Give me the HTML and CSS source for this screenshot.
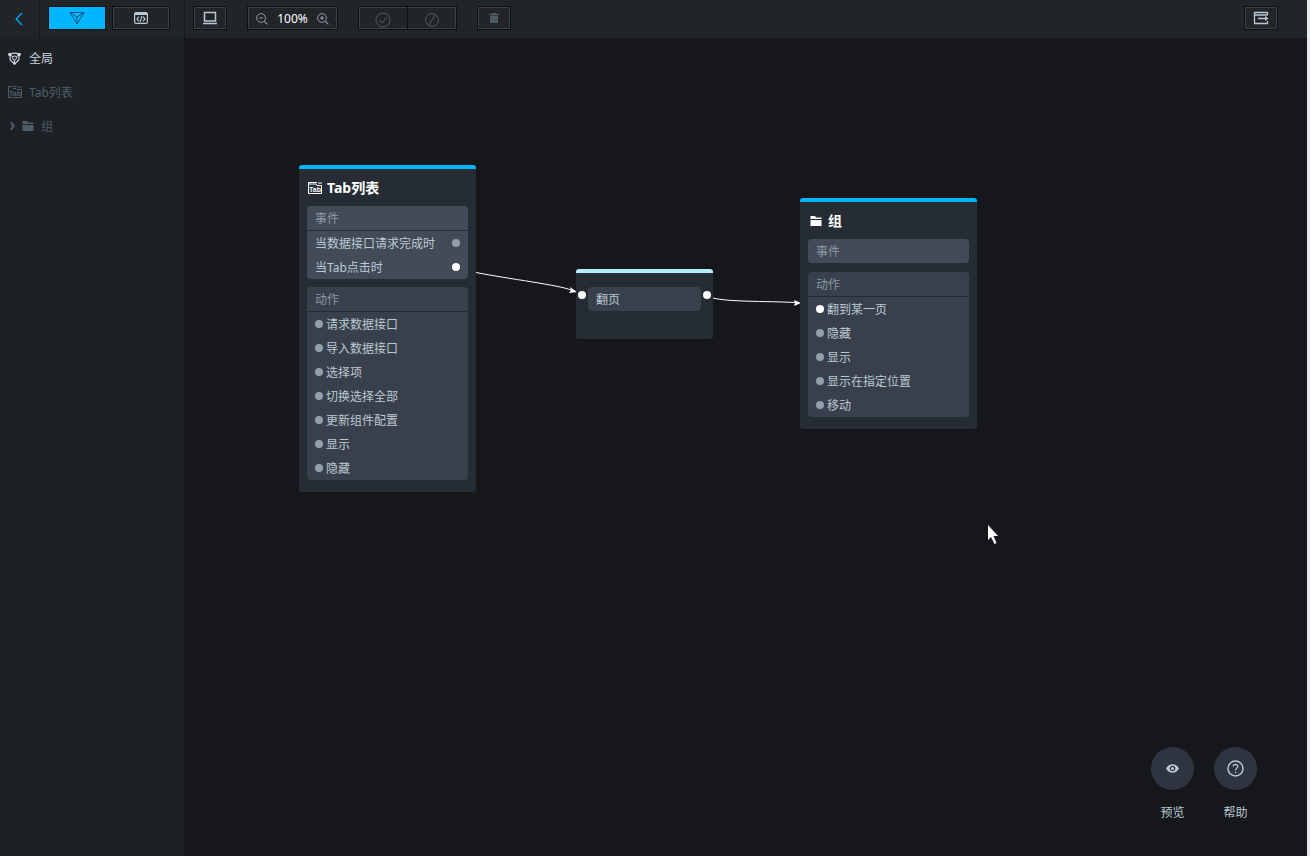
FILE: index.html
```html
<!DOCTYPE html>
<html lang="zh-CN">
<head>
	<meta charset="UTF-8">
	<title>蓝图编辑器</title>
	<link rel="stylesheet" href="styles.css">
</head>
<body>
	<div class="app">
		<header class="topbar">
			<div class="topbar-left">
				<button class="back" aria-label="返回">
					<svg width="8" height="14" viewBox="0 0 8 14"><path d="M7 1L1.200 7 7 13" fill="none" stroke="currentColor" stroke-width="1.500"/></svg>
				</button>
				<div class="modes">
					<button class="btn btn-wide active" aria-label="蓝图">
						<svg width="16" height="14" viewBox="0 0 16 14"><path d="M1 1.500h14L8 13zM1 1.500l7 4.500 7-4.500M8 6v7" fill="none" stroke="currentColor" stroke-width=".9"/></svg>
					</button>
					<button class="btn btn-wide" aria-label="代码">
						<svg width="14" height="12" viewBox="0 0 14 12"><rect x=".6" y=".6" width="12.800" height="10.800" rx="1.500" fill="none" stroke="currentColor" stroke-width="1.200"/><path d="M1 1h12v2H1z" fill="currentColor"/><path d="M5 4.700L3 7l2 2.300M9 4.700L11 7 9 9.300M7.800 4.200L6.200 9.800" fill="none" stroke="currentColor" stroke-width="1.200"/></svg>
					</button>
				</div>
			</div>
			<div class="tools">
				<button class="btn btn-icon" aria-label="画布">
					<svg width="14" height="14" viewBox="0 0 14 14"><path d="M1.500 1.500h11v8.500h-11z" fill="none" stroke="currentColor" stroke-width="1.500"/><path d="M0 12.500h14" stroke="currentColor" stroke-width="1.500"/></svg>
				</button>
				<div class="btn zoom">
					<button class="plain" aria-label="缩小">
						<svg width="12" height="12" viewBox="0 0 12 12"><path d="M3 5h4M8.400 8.400l3 3" stroke="currentColor" stroke-width="1.200"/><circle cx="5" cy="5" r="4.400" fill="none" stroke="currentColor"/></svg>
					</button>
					<span>100%</span>
					<button class="plain" aria-label="放大">
						<svg width="12" height="12" viewBox="0 0 12 12"><path d="M3 5h4M5 3v4M8.400 8.400l3 3" stroke="currentColor" stroke-width="1.200"/><circle cx="5" cy="5" r="4.400" fill="none" stroke="currentColor"/></svg>
					</button>
				</div>
				<div class="btn pair">
					<button class="plain" aria-label="启用" disabled>
						<svg width="16" height="16" viewBox="0 0 16 16"><circle cx="8" cy="8" r="7" fill="none" stroke="currentColor"/><path d="M4.200 8l3 3 5-6" fill="none" stroke="currentColor"/></svg>
					</button>
					<button class="plain" aria-label="禁用" disabled>
						<svg width="16" height="16" viewBox="0 0 16 16"><circle cx="8" cy="8" r="6.500" fill="none" stroke="currentColor"/><path d="M11.500 2.500l-7 11" fill="none" stroke="currentColor"/></svg>
					</button>
				</div>
				<button class="btn btn-icon" aria-label="删除" disabled>
					<svg width="10" height="10" viewBox="0 0 10 10"><path d="M0 .8h3V0h4v.8h3V2H0zM1 2.500h8V10H1z" fill="currentColor"/></svg>
				</button>
			</div>
			<button class="btn btn-icon export" aria-label="导出">
				<svg width="16" height="14" viewBox="0 0 16 14"><path d="M14.500 4V1.500h-13v11h13V10M1 4h13.500M5 7.500h9" fill="none" stroke="currentColor" stroke-width="1.300"/><path d="M12 5l3.500 2.500L12 10z" fill="currentColor"/></svg>
			</button>
		</header>
		<div class="content">
			<nav class="sidebar">
				<ul>
					<li class="current">
						<svg width="13" height="13" viewBox="0 0 13 13"><path d="M2 2.500C5 .8 8 .8 11 2.500L10.800 8 6.500 12 2.200 8z" fill="none" stroke="currentColor" stroke-width="1.200"/><path d="M2.500 3L5 5M10.500 3L8 5M6.500 8v3" fill="none" stroke="currentColor"/><circle cx="6.500" cy="6" r="2" fill="none" stroke="currentColor"/><circle cx="1.800" cy="2.500" r="1.700" fill="currentColor"/><circle cx="11.200" cy="2.500" r="1.700" fill="currentColor"/><circle cx="6.500" cy="11.500" r="1.300" fill="currentColor"/></svg>
						<a href="#">全局</a>
					</li>
					<li>
						<svg width="14" height="12" viewBox="0 0 14 12"><path d="M9 .5H.5v11h13V3.500M5 2.500h3l1 1h4.500M10 1h4" fill="none" stroke="currentColor"/><text x="7" y="10" class="tab-text">Tab</text></svg>
						<a href="#">Tab列表</a>
					</li>
					<li class="group">
						<svg width="5" height="8" viewBox="0 0 5 8"><path d="M0 0h2l3 4-3 4H0l2-4z" fill="currentColor"/></svg>
						<svg width="12" height="10" viewBox="0 0 12 10"><path d="M.5 0h4.500l1 1.500h5.500V3H.5zM.5 4h11v6H.5z" fill="currentColor"/></svg>
						<a href="#">组</a>
					</li>
				</ul>
			</nav>
			<main class="canvas">
				<svg class="lines" width="800" height="400">
					<path d="M292 234.500C325 241 375 247 387 252"/>
					<path d="M529 260C545 264 580 263 611 264.500"/>
					<path class="head" d="M393 254l-7-5 1 3-2 3z"/>
					<path class="head" d="M617 265l-7-3 1 3-1 3z"/>
				</svg>

				<section class="node node-tab">
					<h3><svg width="14" height="12" viewBox="0 0 14 12"><path d="M9 .5H.5v11h13V3.500M1 2h7l1 1.500h4.500M10 1h4" fill="none" stroke="currentColor"/><text x="7" y="10" class="tab-text">Tab</text></svg>Tab列表</h3>
					<div class="panel events">
						<h4>事件</h4>
						<ul>
							<li>当数据接口请求完成时<i class="dot"></i></li>
							<li>当Tab点击时<i class="dot on"></i></li>
						</ul>
					</div>
					<div class="panel">
						<h4>动作</h4>
						<ul>
							<li><i class="dot"></i>请求数据接口</li>
							<li><i class="dot"></i>导入数据接口</li>
							<li><i class="dot"></i>选择项</li>
							<li><i class="dot"></i>切换选择全部</li>
							<li><i class="dot"></i>更新组件配置</li>
							<li><i class="dot"></i>显示</li>
							<li><i class="dot"></i>隐藏</li>
						</ul>
					</div>
				</section>

				<section class="node node-page">
					<i class="dot on"></i>
					<p>翻页</p>
					<i class="dot on"></i>
				</section>

				<section class="node node-group">
					<h3><svg width="12" height="10" viewBox="0 0 12 10"><path d="M.5 0h4.500l1 1.500h5.500V3H.5zM.5 4h11v6H.5z" fill="currentColor"/></svg>组</h3>
					<div class="panel events empty">
						<h4>事件</h4>
					</div>
					<div class="panel">
						<h4>动作</h4>
						<ul>
							<li><i class="dot on"></i>翻到某一页</li>
							<li><i class="dot"></i>隐藏</li>
							<li><i class="dot"></i>显示</li>
							<li><i class="dot"></i>显示在指定位置</li>
							<li><i class="dot"></i>移动</li>
						</ul>
					</div>
				</section>

				<svg class="cursor" width="12" height="20" viewBox="0 0 12 20"><path d="M0 0v15l3-3 3.500 7 2-1-3-7H10z" fill="#fff"/></svg>

				<div class="helpers">
					<button>
						<span class="round"><svg width="13" height="9" viewBox="0 0 12 8"><path d="M0 4C2.500-1.200 9.500-1.200 12 4 9.500 9.200 2.500 9.200 0 4z" fill="currentColor"/><circle cx="6" cy="4" r="2" fill="none" stroke="#2e3540" stroke-width="1.200"/></svg></span>
						预览
					</button>
					<button>
						<span class="round"><svg width="17" height="17" viewBox="0 0 18 18"><circle cx="9" cy="9" r="8" fill="none" stroke="currentColor" stroke-width="1.500"/><path d="M6.500 7c0-3.300 5-3.300 5 0 0 1.800-2.500 2-2.500 4" fill="none" stroke="currentColor" stroke-width="1.300"/><circle cx="9" cy="13.200" r=".8" fill="currentColor"/></svg></span>
						帮助
					</button>
				</div>
			</main>
		</div>
	</div>
</body>
</html>
```

FILE: styles.css
```css
*{
	padding: 0;
	margin: 0;
	box-sizing: border-box;
}
body{
	background: #e8eaed;
	color: #bcc9d4;
	font: 12px/26px "Noto Sans", "Noto Sans CJK SC", sans-serif;
}
ul{
	list-style: none;
}
a{
	color: inherit;
	text-decoration: none;
}
button{
	background: none;
	border: none;
	color: inherit;
	font: inherit;
	cursor: pointer;
}
svg{
	display: block;
	flex: none;
}
.tab-text{
	font: bold 7px "Liberation Sans", sans-serif;
	text-anchor: middle;
	fill: currentColor;
}
.app{
	display: flex;
	flex-direction: column;
	min-height: 100vh;
	margin-right: 3px;
	background: #15171b;
}

/* 顶部工具栏 */
.topbar{
	display: flex;
	align-items: center;
	height: 38px;
	padding-right: 29px;
	background: #222528;
}
.topbar-left{
	display: flex;
	width: 185px;
	height: 100%;
	border-right: 1px solid #15171b;
}
.back{
	display: flex;
	align-items: center;
	justify-content: center;
	width: 40px;
	padding-right: 2px;
	border-right: 1px solid #15171b;
	color: #00a5f0;
}
.modes{
	display: flex;
	align-items: center;
	gap: 6px;
	padding: 0 0 2px 8px;
}
.btn{
	display: flex;
	align-items: center;
	justify-content: center;
	height: 24px;
	border: 1px solid #0e1013;
	box-shadow: inset 0 0 0 1px #393f4a;
}
.btn-wide{
	width: 58px;
}
.btn-icon{
	width: 34px;
}
.btn.active{
	background: #00b7ff;
	box-shadow: none;
	color: #0b4a72;
}
.btn:disabled,
.plain:disabled{
	color: #4c5a62;
	cursor: default;
}
.tools{
	display: flex;
	gap: 20px;
	padding: 0 0 2px 8px;
}
.zoom{
	gap: 9px;
	width: 91px;
	padding-top: 2px;
	color: #8f9ca8;
}
.zoom span{
	color: #fff;
}
.pair{
	width: 99px;
}
.pair .plain{
	display: flex;
	flex: 1;
	align-items: flex-end;
	justify-content: center;
	height: 22px;
	padding-bottom: 1px;
}
.pair .plain + .plain{
	border-left: 1px solid #0e1013;
}
.export{
	margin: 0 0 2px auto;
}

/* 左侧图层列表 */
.content{
	display: flex;
	flex: 1;
}
.sidebar{
	width: 184px;
	padding-top: 3px;
	background: #1d2125;
}
.sidebar li{
	display: flex;
	align-items: center;
	gap: 7px;
	height: 34px;
	padding-left: 8px;
	color: #4f5d66;
}
.sidebar a{
	padding-top: 2px;
}
.sidebar .current{
	gap: 8px;
	color: #cbd5dd;
}
.sidebar .group{
	padding-left: 10px;
}

/* 画布 */
.canvas{
	position: relative;
	flex: 1;
	overflow: hidden;
}
.lines{
	position: absolute;
	left: 0;
	top: 0;
	fill: none;
	stroke: #fff;
}
.lines .head{
	fill: #fff;
	stroke: none;
}
.node{
	position: absolute;
	width: 177px;
	padding: 0 8px 12px;
	border-top: 4px solid #00b7ff;
	border-radius: 3px;
	background: #262c33;
}
.node-tab{
	left: 115px;
	top: 127px;
}
.node-group{
	left: 616px;
	top: 160px;
}
.node h3{
	display: flex;
	align-items: center;
	gap: 5px;
	height: 37px;
	padding-left: 1px;
	color: #fff;
	font-size: 14px;
}
.node-group h3{
	gap: 6px;
	padding-left: 2px;
}
.panel{
	border-radius: 4px;
	background: #3a404b;
}
.panel + .panel{
	margin-top: 8px;
}
.panel h4{
	height: 25px;
	padding-left: 8px;
	border-bottom: 1px solid #262c33;
	color: #8b98a5;
	font-weight: normal;
}
.panel li{
	display: flex;
	gap: 3px;
	height: 24px;
	padding: 0 8px;
}
.events{
	background: #434b58;
}
.events li{
	justify-content: space-between;
}
.panel.empty{
	height: 24px;
}
.empty h4{
	border: none;
}
.empty + .panel{
	margin-top: 9px;
}
.dot{
	flex: none;
	width: 8px;
	height: 8px;
	margin-top: 8px;
	border-radius: 50%;
	background: #93a0ab;
}
.dot.on{
	background: #fff;
}
.node-page{
	display: flex;
	justify-content: space-between;
	left: 392px;
	top: 231px;
	width: 137px;
	height: 70px;
	padding: 14px 2px 0;
	border-top-color: #b3ecfb;
}
.node-page p{
	width: 113px;
	height: 24px;
	padding-left: 8px;
	border-radius: 4px;
	background: #3a404b;
}
.node-page .dot{
	margin-top: 4px;
}
.cursor{
	position: absolute;
	left: 804px;
	top: 487px;
}
.helpers{
	position: absolute;
	right: 50px;
	bottom: 30px;
	display: flex;
	gap: 20px;
}
.helpers button{
	display: flex;
	flex-direction: column;
	align-items: center;
	gap: 10px;
}
.round{
	display: flex;
	align-items: center;
	justify-content: center;
	width: 43px;
	height: 43px;
	border-radius: 50%;
	background: #2e3540;
}
```
